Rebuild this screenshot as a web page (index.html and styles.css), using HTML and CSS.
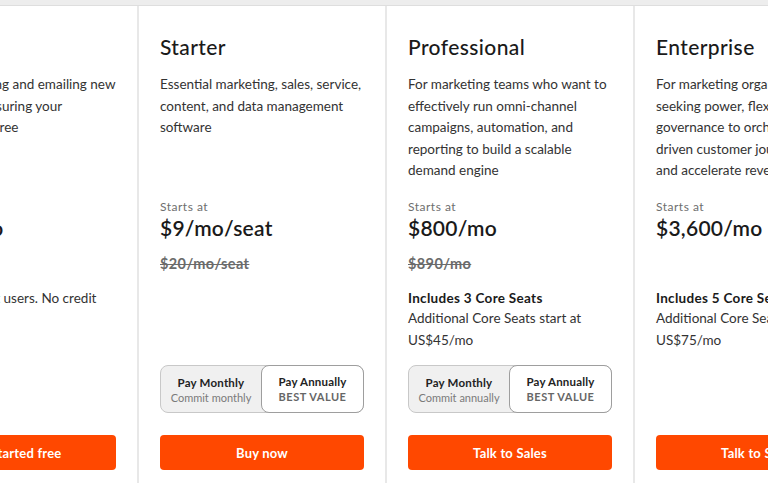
FILE: index.html
```html
<!DOCTYPE html>
<html>
<head>
<meta charset="utf-8">
<link rel="stylesheet" href="styles.css">
</head>
<body>
<div class="topbar"></div>
<div class="plans">
  <section class="plan">
    <h2 class="title">Free</h2>
    <p class="desc desc-lines">Tools for logging and emailing new<br>leads and measuring your<br>marketing for free</p>
    <div class="starts">&nbsp;</div>
    <div class="price">US$0/mo</div>
    <div class="old"></div>
    <p class="note">Includes 2 seat users. No credit card required.</p>
    <button class="cta">Get started free</button>
  </section>
  <section class="plan">
    <h2 class="title">Starter</h2>
    <p class="desc">Essential marketing, sales, service, content, and data management software</p>
    <div class="starts">Starts at</div>
    <div class="price">$9/mo/seat</div>
    <div class="old">$20/mo/seat</div>
    <div class="toggle">
      <div class="opt opt-off"><span class="opt-main">Pay Monthly</span><span class="opt-sub">Commit monthly</span></div>
      <div class="opt opt-on"><span class="opt-main">Pay Annually</span><span class="opt-best">BEST VALUE</span></div>
    </div>
    <button class="cta">Buy now</button>
  </section>
  <section class="plan">
    <h2 class="title">Professional</h2>
    <p class="desc">For marketing teams who want to effectively run omni-channel campaigns, automation, and reporting to build a scalable demand engine</p>
    <div class="starts">Starts at</div>
    <div class="price">$800/mo</div>
    <div class="old">$890/mo</div>
    <div class="seats">Includes 3 Core Seats</div>
    <div class="extra">Additional Core Seats start at US$45/mo</div>
    <div class="toggle">
      <div class="opt opt-off"><span class="opt-main">Pay Monthly</span><span class="opt-sub">Commit annually</span></div>
      <div class="opt opt-on"><span class="opt-main">Pay Annually</span><span class="opt-best">BEST VALUE</span></div>
    </div>
    <button class="cta">Talk to Sales</button>
  </section>
  <section class="plan">
    <h2 class="title">Enterprise</h2>
    <p class="desc">For marketing organizations seeking power, flexibility, and governance to orchestrate data-driven customer journeys<br>and accelerate revenue</p>
    <div class="starts">Starts at</div>
    <div class="price">$3,600/mo</div>
    <div class="old"></div>
    <div class="seats">Includes 5 Core Seats</div>
    <div class="extra">Additional Core Seats start at US$75/mo</div>
    <button class="cta">Talk to Sales</button>
  </section>
</div>
</body>
</html>
```

FILE: styles.css
```css
* { box-sizing: border-box; }
html, body { margin: 0; padding: 0; }
body {
  width: 768px;
  height: 483px;
  overflow: hidden;
  background: #fff;
  font-family: "Lato", "Open Sans", sans-serif;
  color: #2d2d2d;
}
.topbar {
  height: 6px;
  background: #ededed;
  border-bottom: 1px solid #dedede;
}
.plans {
  display: flex;
  margin-left: -111px;
  height: 477px;
}
.plan {
  flex: 0 0 248px;
  width: 248px;
  border-left: 2px solid #e8e8e8;
  padding: 28px 21px 13px 21px;
  display: flex;
  flex-direction: column;
}
.title {
  margin: 0;
  font-size: 21px;
  line-height: 26px;
  font-weight: 500;
  letter-spacing: 0.4px;
  color: #1a1a1a;
}
.desc {
  margin: 14px 0 0 0;
  font-size: 13.5px;
  line-height: 21.5px;
  color: #333;
  height: 126px;
}
.desc-lines { white-space: nowrap; }
.starts {
  font-size: 12px;
  line-height: 14px;
  letter-spacing: 0.5px;
  color: #6e6e6e;
}
.price {
  font-size: 21px;
  line-height: 26px;
  font-weight: 600;
  letter-spacing: 0.25px;
  color: #1a1a1a;
  margin-top: 1px;
}
.old {
  font-size: 14.5px;
  line-height: 18px;
  font-weight: 700;
  letter-spacing: 0.4px;
  color: #6b6b6b;
  text-decoration: line-through;
  margin-top: 14px;
  height: 18px;
}
.note {
  margin: 15px 0 0 0;
  font-size: 13.5px;
  line-height: 21.5px;
  color: #333;
}
.seats {
  margin-top: 15px;
  font-size: 13.5px;
  line-height: 20px;
  font-weight: 700;
  letter-spacing: 0.3px;
  color: #1a1a1a;
}
.extra {
  font-size: 13.5px;
  line-height: 21.5px;
  color: #333;
}
.toggle {
  margin-top: auto;
  display: flex;
  height: 48px;
  border: 1px solid #c8c8c8;
  border-radius: 8px;
  background: #f0f0f0;
}
.opt {
  display: flex;
  flex-direction: column;
  align-items: center;
  justify-content: center;
  font-size: 11px;
  line-height: 15px;
}
.opt-off {
  width: 100px;
  padding-top: 2px;
}
.opt-on {
  flex: 1;
  background: #fff;
  border: 1px solid #9e9e9e;
  border-radius: 8px;
  margin: -1px -1px -1px 0;
  padding-bottom: 1px;
}
.opt-main { font-weight: 700; color: #222; font-size: 11.5px; letter-spacing: 0.2px; }
.opt-sub { color: #7a7a7a; font-size: 11px; }
.opt-best { font-weight: 700; color: #666; letter-spacing: 0.5px; }
.cta {
  margin-top: 22px;
  height: 35px;
  border: none;
  border-radius: 4px;
  background: #ff4800;
  color: #fff;
  font-family: inherit;
  font-size: 13px;
  font-weight: 700;
  letter-spacing: 0.2px;
  width: 100%;
}
.plan > .note + .cta,
.plan > .extra + .cta { margin-top: auto; }
```
